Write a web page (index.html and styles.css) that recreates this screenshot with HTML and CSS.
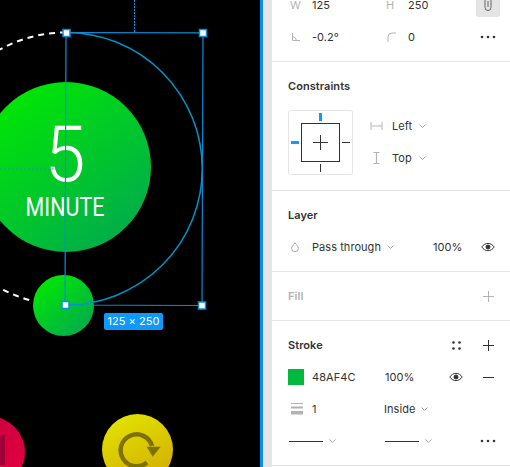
FILE: index.html
```html
<!DOCTYPE html>
<html lang="en">
<head>
    <meta charset="UTF-8">
    <title>Stroke properties</title>
    <link rel="stylesheet" href="styles.css">
</head>
<body>
    <div class="app">
        <div class="canvas">
            <svg class="artboard" width="260" height="467" viewBox="0 0 260 467">
                <defs>
                    <linearGradient id="green" x1="0.1" y1="0.05" x2="0.85" y2="0.95">
                        <stop offset="0" stop-color="#00ea00"/>
                        <stop offset="1" stop-color="#00ab4e"/>
                    </linearGradient>
                    <linearGradient id="yellow" x1="0.2" y1="0" x2="0.7" y2="1">
                        <stop offset="0" stop-color="#e2e400"/>
                        <stop offset="1" stop-color="#d3ad00"/>
                    </linearGradient>
                    <linearGradient id="red" x1="0" y1="0" x2="1" y2="1">
                        <stop offset="0" stop-color="#c4003f"/>
                        <stop offset="1" stop-color="#e6003f"/>
                    </linearGradient>
                </defs>
                <path d="M66 32.500A136.250 136.250 0 0 0 33 301" fill="none" stroke="#fff" stroke-width="2" stroke-dasharray="6 5"/>
                <circle cx="66" cy="167" r="85" fill="url(#green)"/>
                <circle cx="63.500" cy="305.500" r="30.500" fill="url(#green)"/>
                <circle cx="-10.500" cy="452" r="35.500" fill="url(#red)"/>
                <rect x="0" y="435" width="5" height="30" fill="#a00035"/>
                <circle cx="137.500" cy="449.500" r="35.500" fill="url(#yellow)"/>
                <path d="M152 446A16 16 0 1 0 147 462.500" fill="none" stroke="#7e7100" stroke-width="4.500"/>
                <path d="M146.700 446.700H160.700L152.700 456.700Z" fill="#7e7100"/>
                <text class="big-num" x="65" y="181" text-anchor="middle" textLength="41" lengthAdjust="spacingAndGlyphs">5</text>
                <text class="unit" x="65" y="216" text-anchor="middle" textLength="79" lengthAdjust="spacingAndGlyphs">MINUTE</text>
                <path d="M134.500 0V32" stroke="#0b8fe0" stroke-dasharray="2 1"/>
                <path d="M0 169H64" stroke="#0b8fe0" stroke-width="0.800" stroke-dasharray="2 2"/>
                <path d="M66 32.500A136.250 136.250 0 0 1 66 305" fill="none" stroke="#0094c8" stroke-width="1.500"/>
                <path d="M66 32.500L203 32.800L202 305.500L65 305Z" fill="none" stroke="#0a8ddc" stroke-width="1.200"/>
                <rect class="handle" x="63" y="29.500" width="7" height="7"/>
                <rect class="handle" x="199.500" y="29.500" width="7" height="7"/>
                <rect class="handle" x="62" y="301.500" width="7" height="7"/>
                <rect class="handle" x="198.500" y="302" width="7" height="7"/>
            </svg>
            <div class="size-tag">125 × 250</div>
        </div>
        <div class="edge"></div>

        <div class="panel">
            <section class="section">
                <div class="row dims">
                    <span class="glyph">W</span><span>125</span>
                    <span class="glyph">H</span><span>250</span>
                    <span class="icon-btn on">
                        <svg width="8" height="14" viewBox="0 0 8 14" fill="none" stroke="#444" stroke-width="0.800"><path d="M1 0V9.500a3 3 0 0 0 6 0V0M4 3V9"/></svg>
                    </span>
                </div>
                <div class="row dims">
                    <svg class="icon" width="10" height="10" viewBox="0 0 10 10" fill="none" stroke="#b3b3b3"><path d="M1.500 1V8.500H9M1.500 4.500Q5 5 5.500 8.500"/></svg>
                    <span>-0.2°</span>
                    <svg class="icon" width="10" height="10" viewBox="0 0 10 10" fill="none" stroke="#b3b3b3"><path d="M1 10V5Q1 1 5 1H9"/></svg>
                    <span>0</span>
                    <span class="icon-btn">
                        <svg width="16" height="4" viewBox="0 0 16 4" fill="#333"><circle cx="2" cy="2" r="1.300"/><circle cx="8" cy="2" r="1.300"/><circle cx="14" cy="2" r="1.300"/></svg>
                    </span>
                </div>
            </section>

            <section class="section constraints">
                <h2 class="row title">Constraints</h2>
                <div class="constraint-body">
                    <svg class="constraint-box" width="65" height="65" viewBox="0 0 65 65" fill="none">
                        <rect x="0.500" y="0.500" width="64" height="64" rx="2" stroke="#e5e5e5"/>
                        <rect x="13.500" y="13.500" width="38" height="38" stroke="#333"/>
                        <path d="M25 32.500H40M32.500 25V40M54 32.500H62M32.500 54V62" stroke="#333"/>
                        <path d="M32.500 3V11M3 32.500H11" stroke="#0d99ff" stroke-width="3"/>
                    </svg>
                    <div class="constraint-opts">
                        <div class="opt">
                            <svg width="12" height="8" viewBox="0 0 12 8" fill="none" stroke="#b3b3b3"><path d="M.5 0V8M11.500 0V8M1 4H11" stroke-width="1"/></svg>
                            <span>Left</span>
                            <svg class="chev" width="7" height="4" viewBox="0 0 7 4" fill="none" stroke="#a8a8a8"><path d="M.5 .5L3.500 3.500L6.500 .5"/></svg>
                        </div>
                        <div class="opt">
                            <svg width="12" height="12" viewBox="0 0 12 12" fill="none" stroke="#b3b3b3"><path d="M3 .5H9M3 11.500H9M6 1V11" stroke-width="1.200"/></svg>
                            <span>Top</span>
                            <svg class="chev" width="7" height="4" viewBox="0 0 7 4" fill="none" stroke="#a8a8a8"><path d="M.5 .5L3.500 3.500L6.500 .5"/></svg>
                        </div>
                    </div>
                </div>
            </section>

            <section class="section">
                <h2 class="row title">Layer</h2>
                <div class="row layer-row">
                    <svg class="icon" width="8" height="10" viewBox="0 0 8 10" fill="none" stroke="#a8a8a8"><path d="M4 .8C2.500 3 .6 4.500 .6 6.300a3.400 3.400 0 0 0 6.800 0C7.400 4.500 5.500 3 4 .8Z"/></svg>
                    <span class="opt-inline">Pass through
                        <svg class="chev" width="7" height="4" viewBox="0 0 7 4" fill="none" stroke="#a8a8a8"><path d="M.5 .5L3.500 3.500L6.500 .5"/></svg>
                    </span>
                    <span>100%</span>
                    <span class="icon-btn">
                        <svg width="14" height="10" viewBox="0 0 14 10" fill="none" stroke="#333"><path d="M.8 5C3.800 .2 10.200 .2 13.200 5C10.200 9.800 3.800 9.800 .8 5Z"/><circle cx="7" cy="5" r="2" fill="#333"/></svg>
                    </span>
                </div>
            </section>

            <section class="section">
                <div class="row title-row">
                    <h2 class="title muted">Fill</h2>
                    <span class="icon-btn">
                        <svg width="11" height="11" viewBox="0 0 11 11" stroke="#b3b3b3"><path d="M0 5.500H11M5.500 0V11"/></svg>
                    </span>
                </div>
            </section>

            <section class="section">
                <div class="row title-row">
                    <h2 class="title">Stroke</h2>
                    <span class="icon-btn">
                        <svg width="9" height="9" viewBox="0 0 9 9" fill="#333"><circle cx="1.500" cy="1.500" r="1.300"/><circle cx="7.500" cy="1.500" r="1.300"/><circle cx="1.500" cy="7.500" r="1.300"/><circle cx="7.500" cy="7.500" r="1.300"/></svg>
                    </span>
                    <span class="icon-btn">
                        <svg width="11" height="11" viewBox="0 0 11 11" stroke="#333"><path d="M0 5.500H11M5.500 0V11"/></svg>
                    </span>
                </div>
                <div class="row stroke-row">
                    <span class="swatch"></span>
                    <span>48AF4C</span>
                    <span>100%</span>
                    <span class="icon-btn">
                        <svg width="14" height="10" viewBox="0 0 14 10" fill="none" stroke="#333"><path d="M.8 5C3.800 .2 10.200 .2 13.200 5C10.200 9.800 3.800 9.800 .8 5Z"/><circle cx="7" cy="5" r="2" fill="#333"/></svg>
                    </span>
                    <span class="icon-btn">
                        <svg width="11" height="1" viewBox="0 0 11 1" stroke="#333"><path d="M0 .5H11"/></svg>
                    </span>
                </div>
                <div class="row weight-row">
                    <svg class="icon" width="12" height="12" viewBox="0 0 12 12" fill="#b3b3b3"><rect width="12" height="1"/><rect y="3.500" width="12" height="2"/><rect y="8" width="12" height="3.500"/></svg>
                    <span>1</span>
                    <span class="opt-inline">Inside
                        <svg class="chev" width="7" height="4" viewBox="0 0 7 4" fill="none" stroke="#a8a8a8"><path d="M.5 .5L3.500 3.500L6.500 .5"/></svg>
                    </span>
                </div>
                <div class="row caps-row">
                    <span class="cap"><i class="cap-line"></i>
                        <svg class="chev" width="7" height="4" viewBox="0 0 7 4" fill="none" stroke="#a8a8a8"><path d="M.5 .5L3.500 3.500L6.500 .5"/></svg>
                    </span>
                    <span class="cap"><i class="cap-line"></i>
                        <svg class="chev" width="7" height="4" viewBox="0 0 7 4" fill="none" stroke="#a8a8a8"><path d="M.5 .5L3.500 3.500L6.500 .5"/></svg>
                    </span>
                    <span class="icon-btn">
                        <svg width="16" height="4" viewBox="0 0 16 4" fill="#333"><circle cx="2" cy="2" r="1.300"/><circle cx="8" cy="2" r="1.300"/><circle cx="14" cy="2" r="1.300"/></svg>
                    </span>
                </div>
            </section>
        </div>
    </div>
</body>
</html>
```
FILE: styles.css
```css
* {
    box-sizing: border-box;
}
html, body {
    height: 100%;
}
body {
    margin: 0;
    overflow: hidden;
    font-family: Inter, "Liberation Sans", sans-serif;
    font-size: 11px;
    letter-spacing: 0.005em;
    color: #333;
    background: #fff;
}
.app {
    display: flex;
    height: 467px;
    overflow: hidden;
}
.canvas {
    position: relative;
    width: 260px;
    flex: none;
    background: #000;
}
.artboard {
    display: block;
}
.big-num {
    font-family: Roboto, sans-serif;
    font-weight: 300;
    font-size: 78px;
    fill: #fff;
}
.unit {
    font-family: Roboto, sans-serif;
    font-weight: 400;
    font-size: 26px;
    fill: #fff;
}
.handle {
    fill: #fff;
    stroke: #0a8ddc;
    stroke-width: 1.500;
}
.size-tag {
    position: absolute;
    left: 104px;
    top: 313px;
    width: 59px;
    height: 17px;
    border-radius: 2px;
    background: #0d99ff;
    color: #fff;
    font-size: 11px;
    line-height: 17px;
    text-align: center;
}
.edge {
    width: 12px;
    flex: none;
    background: #e5e5e5;
    border-left: 3px solid #0d8bf0;
}
.panel {
    flex: 1;
    min-width: 0;
    margin-top: -11px;
}
.section {
    padding: 8px 10px 8px 16px;
    border-bottom: 1px solid #e5e5e5;
}
.section:first-child {
    padding-top: 0;
}
.constraints {
    padding-bottom: 15px;
}
.row {
    height: 32px;
    margin: 0;
    display: flex;
    align-items: center;
}
.title {
    margin: 0;
    font-size: 11px;
    font-weight: 600;
}
.muted {
    color: #b3b3b3;
}
.dims {
    display: grid;
    grid-template-columns: 24px 72px 24px 68px 24px;
}
.glyph {
    color: #b3b3b3;
    padding-left: 2px;
}
.icon {
    margin-left: 3px;
}
.icon-btn {
    width: 24px;
    height: 24px;
    display: flex;
    align-items: center;
    justify-content: center;
    flex: none;
    border-radius: 2px;
}
.icon-btn.on {
    background: #e5e5e5;
}
.constraint-body {
    display: flex;
    margin-top: 8px;
}
.constraint-box {
    flex: none;
    display: block;
}
.constraint-opts {
    margin-left: 17px;
}
.opt {
    height: 32px;
    display: flex;
    align-items: center;
    gap: 9px;
}
.opt svg:first-child {
    width: 13px;
}
.opt .chev {
    margin-left: -2px;
}
.chev {
    flex: none;
}
.opt-inline {
    display: inline-flex;
    align-items: center;
    gap: 6px;
}
.layer-row {
    display: grid;
    grid-template-columns: 24px 121px 43px 24px;
}
.title-row .title {
    margin-right: auto;
}
.title-row .icon-btn:last-child {
    margin-left: 8px;
}
.stroke-row {
    display: grid;
    grid-template-columns: 24px 73px 59px 24px 8px 24px;
}
.stroke-row .icon-btn:last-child {
    grid-column: 6;
}
.swatch {
    width: 16px;
    height: 16px;
    background: #00b93f;
}
.weight-row {
    display: grid;
    grid-template-columns: 24px 72px 1fr;
}
.caps-row {
    display: grid;
    grid-template-columns: 96px 92px 1fr 24px;
}
.cap {
    display: flex;
    align-items: center;
    gap: 6px;
    padding-left: 1px;
}
.cap-line {
    display: block;
    width: 34px;
    height: 1px;
    background: #333;
}
```
